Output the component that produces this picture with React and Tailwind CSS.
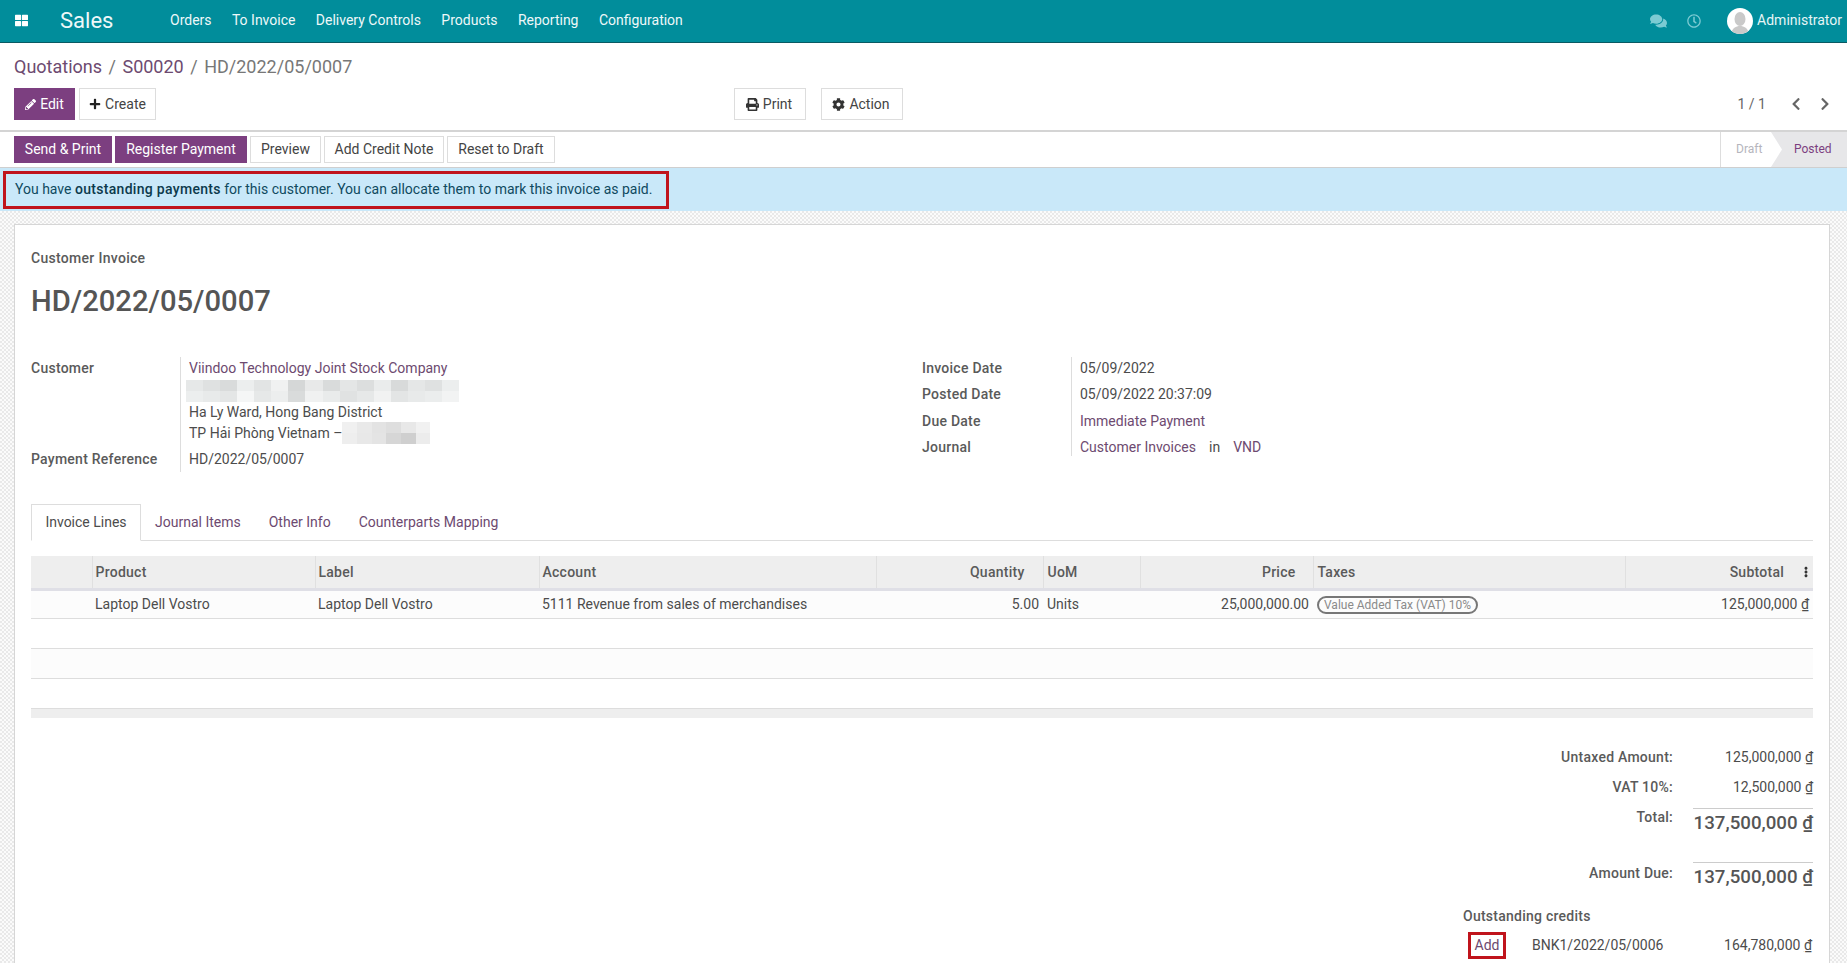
import React from 'react';
import {
  FaThLarge, FaComments, FaRegClock, FaPencilAlt, FaPlus, FaPrint, FaCog,
  FaChevronLeft, FaChevronRight, FaEllipsisV,
} from 'react-icons/fa';

const menu = ['Orders', 'To Invoice', 'Delivery Controls', 'Products', 'Reporting', 'Configuration'];
const tabs = ['Journal Items', 'Other Info', 'Counterparts Mapping'];

const blurTop = ['#e6e8e8', '#dfe1e1', '#d9dbdb', '#eceeee', '#e2e4e4', '#f0f1f1', '#d5d7d7', '#e8e9e9', '#d9dbdb', '#e4e6e6', '#dcdede', '#eaecec', '#d8dada', '#e5e7e7', '#dfe1e1', '#eceeee'];
const blurBottom = ['#eceeee', '#e8eaea', '#e4e6e6', '#f5f6f6', '#e6e8e8', '#eceeee', '#d9dbdb', '#f0f1f1', '#e9ebeb', '#e0e2e2', '#e6e8e8', '#f1f2f2', '#e3e5e5', '#e8eaea', '#ebeded', '#f2f3f3'];
const blurSmall = ['#f0f0f0', '#e9e9e9', '#e3e3e3', '#dedede', '#e8e8e8', '#f1f1f1'];
const blurSmall2 = ['#eeeeee', '#e8e8e8', '#e4e4e4', '#d6d6d6', '#cfcfcf', '#ececec'];

const Blur = ({ rows, className }) => (
  <div className={className}>
    {rows.map((row, i) => (
      <div key={i} className="flex flex-1">
        {row.map((c, j) => (
          <div key={j} className="flex-1" style={{ backgroundColor: c }} />
        ))}
      </div>
    ))}
  </div>
);

const Dong = () => <span className="underline">₫</span>;

const Btn = ({ primary, className = '', children }) => (
  <div
    className={`flex items-center justify-center gap-1 border text-sm ${
      primary ? 'bg-[#7c3f80] border-[#7c3f80] text-white' : 'bg-white border-[#dddddd] text-[#444444]'
    } ${className}`}
  >
    {children}
  </div>
);

const Field = ({ label, children, className = '' }) => (
  <div className={`flex ${className}`}>
    <div className="w-[149px] shrink-0 font-medium tracking-[0.25px] text-[#5a5a5a]">{label}</div>
    <div className="pl-[9px]">{children}</div>
  </div>
);

const Th = ({ right, className = '', children }) => (
  <th className={`border-r border-[#e0e0e0] font-medium tracking-[0.25px] text-[#5a5a5a] ${right ? 'pl-1 text-right' : 'pl-[3px] text-left'} ${className}`}>
    {children}
  </th>
);

const Total = ({ label, children, className = '' }) => (
  <div className={`flex justify-end ${className}`}>
    <div className="font-medium tracking-[0.25px] text-[#5a5a5a]">{label}</div>
    <div className="w-[140px] text-right">{children}</div>
  </div>
);

export default function App() {
  return (
    <div className="flex h-screen flex-col overflow-hidden bg-white font-['Roboto',sans-serif] text-sm text-[#4c4c4c]">
      {/* Navbar */}
      <div className="flex h-[43px] shrink-0 items-center border-b border-[#0a5a63] bg-[#018d9b] pb-px text-[#eef8f9]">
        <FaThLarge className="ml-[15px] h-[13px] w-[13px] text-white" />
        <div className="ml-[32px] w-[110px] text-[22px] leading-none">Sales</div>
        <div className="flex gap-[20.4px] pb-[2px]">
          {menu.map((m) => (
            <span key={m}>{m}</span>
          ))}
        </div>
        <div className="ml-auto flex items-center pr-[5px]">
          <FaComments className="h-[16px] w-[17px] text-[#7ccbd3]" />
          <FaRegClock className="ml-[20px] h-[14px] w-[14px] text-[#7ccbd3]" />
          <div className="ml-[26px] h-[26px] w-[26px] overflow-hidden rounded-full bg-white">
            <svg viewBox="0 0 26 26" className="h-full w-full">
              <ellipse cx="13" cy="11" rx="5.5" ry="7" fill="#c9c9c9" />
              <path d="M4 26c1-6 5-8 9-8s8 2 9 8z" fill="#c9c9c9" />
            </svg>
          </div>
          <span className="ml-[4px] pb-[2px] text-[#e6f5f6]">Administrator</span>
        </div>
      </div>

      {/* Control panel */}
      <div className="shrink-0 border-b-2 border-[#d4d4d4] px-[14px] pb-[10px]">
        <div className="flex h-[45px] items-center gap-[6.5px] pt-[3px] text-[18px]">
          <span className="text-[#6d4a70]">Quotations</span>
          <span className="text-[#777777]">/</span>
          <span className="text-[#6d4a70]">S00020</span>
          <span className="text-[#777777]">/</span>
          <span className="text-[#777777]">HD/2022/05/0007</span>
        </div>
        <div className="flex h-[32px] items-stretch">
          <Btn primary className="w-[61px]">
            <FaPencilAlt className="h-[11px] w-[11px]" />
            Edit
          </Btn>
          <Btn className="ml-[4px] w-[77px]">
            <FaPlus className="h-[12px] w-[12px] text-[#222222]" />
            Create
          </Btn>
          <Btn className="ml-[578px] w-[72px] pr-[2px]">
            <FaPrint className="h-[13px] w-[13px] text-[#333333]" />
            Print
          </Btn>
          <Btn className="ml-[15px] w-[82px] pr-[2px]">
            <FaCog className="h-[13px] w-[13px] text-[#333333]" />
            Action
          </Btn>
          <div className="ml-auto flex items-center pr-px text-[#666666]">
            <span className="mr-[23px]">1 / 1</span>
            <FaChevronLeft className="h-[14px] w-[14px] text-[#666666]" />
            <FaChevronRight className="ml-[15px] h-[14px] w-[14px] text-[#666666]" />
          </div>
        </div>
      </div>

      {/* Status bar */}
      <div className="flex h-[36px] shrink-0 items-center border-b border-[#cfcfcf] pl-[14px]">
        <div className="flex h-[27px] items-stretch gap-[3px]">
          <Btn primary className="w-[98px] pb-[2px]">Send &amp; Print</Btn>
          <Btn primary className="w-[132px] pb-[2px]">Register Payment</Btn>
          <Btn className="w-[71px] pb-[2px]">Preview</Btn>
          <Btn className="w-[120px] pb-[2px]">Add Credit Note</Btn>
          <Btn className="w-[108px] pb-[2px]">Reset to Draft</Btn>
        </div>
        <div className="ml-auto flex h-full items-stretch text-xs">
          <div className="flex w-[51px] items-center border-l border-[#dddddd] pb-px pl-[15px] text-[#b5b5bd]">Draft</div>
          <div className="flex w-[76px] items-center bg-[#e7e7e9] pb-px pl-[23px] text-[#7c3f80] [clip-path:polygon(0_0,100%_0,100%_100%,0_100%,11px_50%)]">Posted</div>
        </div>
      </div>

      {/* Alert */}
      <div className="h-[43px] shrink-0 bg-[#c9e8f9] pl-[3px] pt-[3px] text-[#0f4a60]">
        <div className="flex h-[38px] w-[666px] items-center border-[3px] border-[#c0141c] pb-[3px] pl-[9px]">
          <span>
            You have <b className="font-medium tracking-[0.3px] text-[#0c3a4c]">outstanding payments</b> for this customer. You can allocate them to mark this invoice as paid.
          </span>
        </div>
      </div>

      {/* Sheet */}
      <div className="min-h-0 flex-1 bg-[repeating-conic-gradient(#e9e9e9_0_25%,#fbfbfb_0_50%)] bg-[length:4px_4px] pl-[14px] pr-[17px] pt-[13px]">
        <div className="h-[800px] border border-b-0 border-[#d6d6d6] bg-white pl-[16px] pr-[16px] pt-[24px]">
          <div className="font-medium leading-[18px] tracking-[0.3px] text-[#5a5a5a]">Customer Invoice</div>
          <h1 className="mt-[15px] text-[29.2px] font-medium leading-[38px] text-[#555555]">HD/2022/05/0007</h1>

          {/* Form */}
          <div className="mt-[37px] flex h-[117px] leading-[22px]">
            <div className="relative h-[115px] w-[891px]">
              <div className="absolute bottom-0 left-[149px] top-0 w-px bg-[#dddddd]" />
              <Field label="Customer">
                <div className="text-[#6d4a70]">Viindoo Technology Joint Stock Company</div>
                <Blur rows={[blurTop, blurBottom]} className="-ml-[3px] mt-[1px] flex h-[22px] w-[273px] flex-col" />
                <div className="mt-[-1px]">Ha Ly Ward, Hong Bang District</div>
                <div className="flex -mt-px">
                  TP Hải Phòng Vietnam –
                  <Blur rows={[blurSmall, blurSmall2]} className="flex h-[22px] w-[88px] flex-col" />
                </div>
              </Field>
              <Field label="Payment Reference" className="mt-[4px]">HD/2022/05/0007</Field>
            </div>
            <div className="relative h-[103px] flex-1 space-y-[4.3px]">
              <div className="absolute bottom-0 left-[149px] top-0 w-px bg-[#dddddd]" />
              <Field label="Invoice Date">05/09/2022</Field>
              <Field label="Posted Date">05/09/2022 20:37:09</Field>
              <Field label="Due Date"><span className="text-[#6d4a70]">Immediate Payment</span></Field>
              <Field label="Journal">
                <span className="text-[#6d4a70]">Customer Invoices</span>
                <span className="mx-[13px]">in</span>
                <span className="text-[#6d4a70]">VND</span>
              </Field>
            </div>
          </div>

          {/* Tabs */}
          <div className="mt-[30px] flex h-[37px] items-stretch border-b border-[#dddddd]">
            <div className="-mb-px flex w-[110px] items-center justify-center border border-b-white border-[#dddddd] bg-white pb-px">Invoice Lines</div>
            <div className="flex items-center gap-[28px] pb-px pl-[14px] text-[#6d4a70]">
              {tabs.map((t) => (
                <span key={t}>{t}</span>
              ))}
            </div>
          </div>

          {/* Lines */}
          <table className="mt-[15px] w-full table-fixed border-collapse">
            <thead>
              <tr className="h-[33px] border-b-[3px] border-[#dfdfe6] bg-[#eeeeee]">
                <th className="w-[61px] border-r border-[#e0e0e0]" />
                <Th className="w-[223px]">Product</Th>
                <Th className="w-[224px]">Label</Th>
                <Th className="w-[337px]">Account</Th>
                <Th right className="w-[167px] pr-[18px]">Quantity</Th>
                <Th className="w-[97px]"><span className="ml-px">UoM</span></Th>
                <Th right className="w-[173px] pr-[17px]">Price</Th>
                <Th className="w-[312px]"><span className="ml-px">Taxes</span></Th>
                <th className="pr-[5px] text-right font-medium tracking-[0.25px] text-[#5a5a5a]">
                  <span className="inline-flex items-center gap-[20px]">
                    Subtotal
                    <FaEllipsisV className="h-[12px] w-[4px] text-[#333333]" />
                  </span>
                </th>
              </tr>
            </thead>
            <tbody>
              <tr className="h-[29px] border-b border-[#dddddd] bg-[#fcfcfc]">
                <td />
                <td className="pl-[3px]">Laptop Dell Vostro</td>
                <td className="pl-[3px]">Laptop Dell Vostro</td>
                <td className="pl-[3px]">5111 Revenue from sales of merchandises</td>
                <td className="pr-[4px] text-right">5.00</td>
                <td className="px-1">Units</td>
                <td className="pr-[4px] text-right">25,000,000.00</td>
                <td className="px-1">
                  <span className="inline-block rounded-full border-2 border-[#777777] px-[5px] text-xs leading-[14px] text-[#8a8a8a]">Value Added Tax (VAT) 10%</span>
                </td>
                <td className="pr-[4px] text-right">125,000,000 <Dong /></td>
              </tr>
              <tr className="h-[30px] border-b border-[#dddddd]"><td colSpan={9} /></tr>
              <tr className="h-[30px] border-b border-[#dddddd] bg-[#fcfcfc]"><td colSpan={9} /></tr>
              <tr className="h-[30px] border-b border-[#dddddd]"><td colSpan={9} /></tr>
            </tbody>
          </table>
          <div className="h-[9px] bg-[#eeeeee]" />

          {/* Totals */}
          <div className="mt-[30px] leading-[18px]">
            <Total label="Untaxed Amount:">125,000,000 <Dong /></Total>
            <Total label="VAT 10%:" className="mt-[12px]">12,500,000 <Dong /></Total>
            <div className="mt-[12px] flex justify-end">
              <div className="font-medium tracking-[0.25px] text-[#5a5a5a]">Total:</div>
              <div className="ml-[20px] h-[36px] w-[120px] border-t border-[#cccccc] pt-[2px] text-right text-[18.7px] font-medium leading-[24px] text-[#555555]">137,500,000 <Dong /></div>
            </div>
            <div className="mt-[18px] flex justify-end">
              <div className="pt-[2px] font-medium tracking-[0.25px] text-[#5a5a5a]">Amount Due:</div>
              <div className="ml-[20px] h-[36px] w-[120px] border-t border-[#cccccc] pt-[2px] text-right text-[18.7px] font-medium leading-[24px] text-[#555555]">137,500,000 <Dong /></div>
            </div>
            <div className="ml-[1432px] mt-[9px] font-medium tracking-[0.25px] text-[#5a5a5a]">Outstanding credits</div>
            <div className="ml-[1437px] mt-[7px] flex h-[27px] items-center">
              <div className="flex h-full w-[38px] items-center justify-center border-[3px] border-[#c0141c] text-[#6d4a70]">Add</div>
              <span className="ml-[26px]">BNK1/2022/05/0006</span>
              <span className="ml-auto pr-[1px]">164,780,000 <Dong /></span>
            </div>
          </div>
        </div>
      </div>
    </div>
  );
}
